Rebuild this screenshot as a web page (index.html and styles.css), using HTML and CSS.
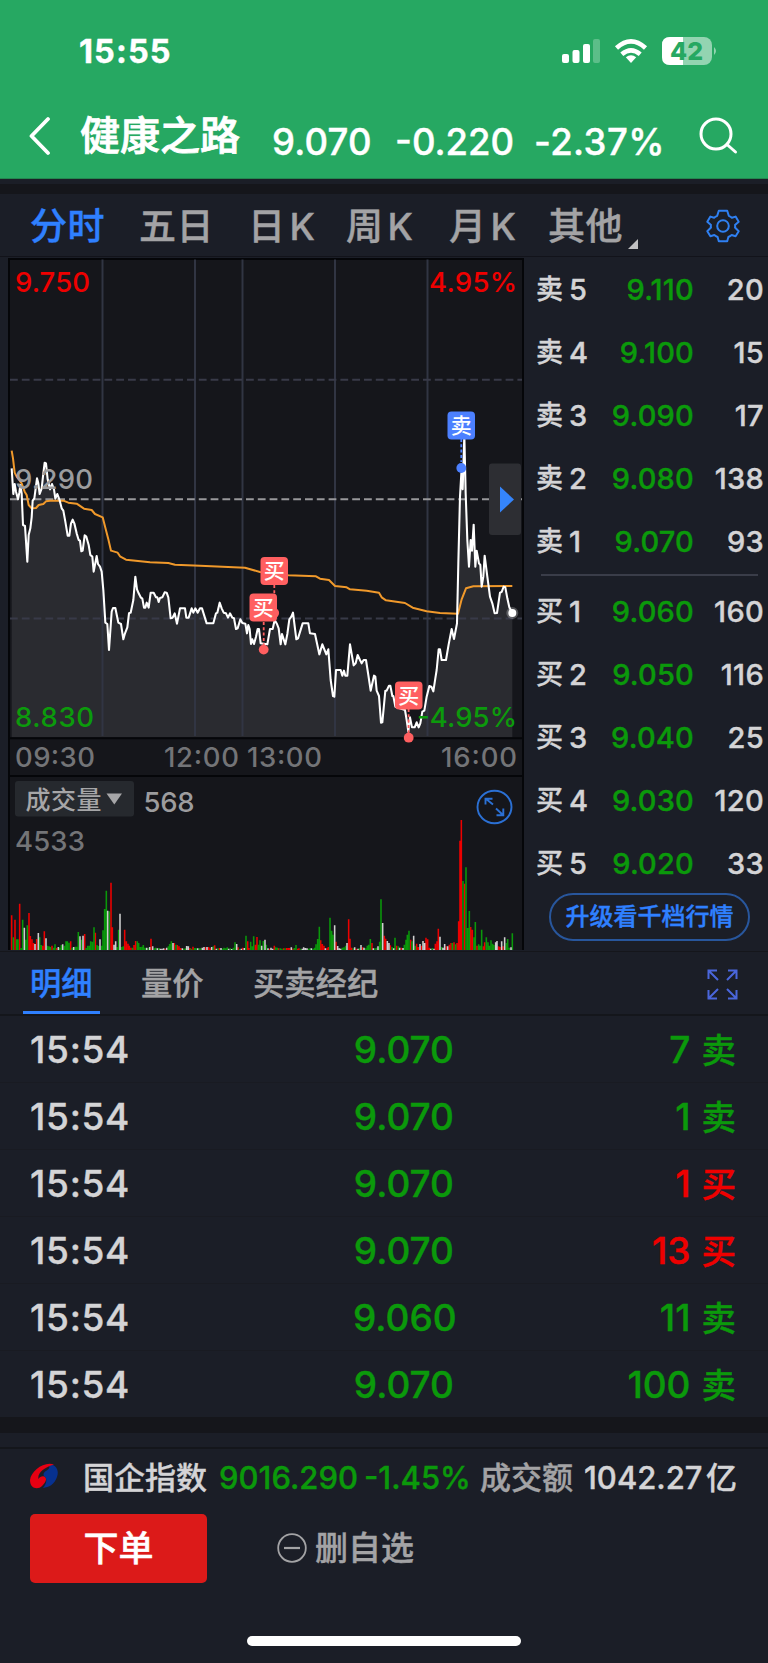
FILE: index.html
```html
<!DOCTYPE html>
<html lang="zh-CN">
<head>
<meta charset="utf-8">
<title>健康之路</title>
<link rel="stylesheet" href="styles.css">
</head>
<body>
<div class="screen">
  <header class="top">
    <div class="status">
      <span class="clock">15:55</span>
      <svg class="status-icons" width="156" height="32" viewBox="560 35 156 32">
        <g fill="#fff">
          <rect x="562" y="54" width="7" height="9" rx="2"/>
          <rect x="572.5" y="50" width="7" height="13" rx="2"/>
          <rect x="583" y="44" width="7" height="19" rx="2"/>
          <rect x="593" y="39" width="7" height="24" rx="2" opacity=".25"/>
          <path d="M631 63l-5.200-5.800q5.200-4 10.400 0z"/>
        </g>
        <g fill="none" stroke="#fff" stroke-width="4.600">
          <path d="M616.500 48Q631 34.700 645.500 48"/>
          <path d="M621.800 54.200Q631 46.400 640.200 54.200"/>
        </g>
        <rect x="662" y="37" width="50" height="28" rx="8" fill="#fff" opacity=".5"/>
        <path d="M683 37h-13q-8 0-8 8v12q0 8 8 8h13z" fill="#fff"/>
        <path d="M714 47q4 4 0 8z" fill="#fff" opacity=".5"/>
        <text class="battery" x="670" y="60" textLength="33" lengthAdjust="spacingAndGlyphs">42</text>
      </svg>
    </div>
    <div class="nav">
      <svg class="back" width="22" height="40" viewBox="0 0 22 40" fill="none" stroke="#fff" stroke-width="3.800" stroke-linecap="round" stroke-linejoin="round"><path d="M19 3L2.500 20 19 37"/></svg>
      <h1 class="title">健康之路</h1>
      <span class="quote q1">9.070</span><span class="quote q2">-0.220</span><span class="quote q3">-2.37%</span>
      <svg class="search" width="40" height="40" viewBox="0 0 40 40" fill="none" stroke="#fff" stroke-width="3" stroke-linecap="round"><circle cx="17" cy="18" r="15"/><path d="M28 28.500L36.500 36"/></svg>
    </div>
  </header>
  <div class="band"></div>
  <nav class="periods">
    <span class="on">分时</span><span>五日</span><span>日<i>K</i></span><span>周<i>K</i></span><span>月<i>K</i></span><span class="more">其他</span>
    <svg class="gear" width="34" height="34" viewBox="-17 -17 34 34" fill="none" stroke="#2f80f2" stroke-width="2" stroke-linejoin="round"><circle r="5.800"/><path d="M-4.200-15.200H4.200L5.800-10.200Q7.600-9.400 8.900-8.200L12.600-9.400 15.700-4.300 12-1Q12.400 0 12 1.500L15.700 5.200 12.600 10.200 8.700 9Q7.200 10.200 5.400 11L4.200 15.200H-4.200L-5.400 11Q-7.200 10.200-8.700 9L-12.600 10.200-15.700 5.200-12 1.500Q-12.400 0-12-1L-15.700-4.300-12.600-9.400-8.900-8.200Q-7.600-9.400-5.800-10.200Z"/></svg>
  </nav>
  <main class="market">
    <svg class="chart" width="516" height="692" viewBox="8 258 516 692">
      <rect x="8" y="258" width="516" height="692" fill="#050609"/>
      <rect x="10" y="260" width="512" height="690" fill="#15161b"/>
      <g transform="translate(0 430) scale(.33333)">
        <path id="area" fill="#2a2b30"/>
      </g>
      <path d="M102.500 259.500V736M195 259.500V736M242.500 259.500V736M335 259.500V736M427.500 259.500V736" stroke="#313543" stroke-width="2"/>
      <path d="M10 379.700H522M10 618.500H522" stroke="#383a48" stroke-width="2" stroke-dasharray="7.800 4"/>
      <path d="M10 499.200H522" stroke="#98989b" stroke-width="2" stroke-dasharray="7.800 4"/>
      <path d="M10 738.300H522M10 776H522" stroke="#050609" stroke-width="2"/>
      <g transform="translate(0 430) scale(.33333)" fill="none" stroke-linejoin="round">
        <path stroke="#f0992b" stroke-width="6" d="M35 62L39 85 44 128 50 140 58 150 65 160 74 185 80 195 86 225 95 235 108 234 116 225 130 222 138 214 150 212 190 212 205 218 230 221 252 236 275 240 285 252 308 262 317 297 325 328 333 362 353 368 360 379 378 389 450 397 505 399 525 404 600 407 735 413 780 426 865 436 948 439 960 446 987 450 1005 468 1040 472 1050 478 1100 482 1137 488 1145 502 1158 511 1215 519 1238 533 1280 544 1320 549 1374 551 1385 508 1398 475 1420 469 1537 468"/>
        <path id="price" stroke="#fff" stroke-width="6.200"/>
      </g>
      <circle cx="512.300" cy="613" r="6" fill="#fff" opacity=".25"/><circle cx="512.300" cy="613" r="4" fill="#fff"/>
      <g class="axis">
        <text x="15" y="292" textLength="75" fill="#ee0000">9.750</text>
        <text x="429" y="292" textLength="88" fill="#ee0000">4.95%</text>
        <text x="15" y="488.500" textLength="78" fill="#9c9c9e">9.290</text>
        <text x="15" y="727" textLength="79" fill="#0c9a0c">8.830</text>
        <text x="417" y="727" textLength="100" fill="#0c9a0c">-4.95%</text>
        <g fill="#737477">
          <text x="15" y="766.700" textLength="80">09:30</text>
          <text x="164" y="766.700" textLength="75">12:00</text>
          <text x="247" y="766.700" textLength="75">13:00</text>
          <text x="441" y="766.700" textLength="76">16:00</text>
          <text x="15" y="850.700" textLength="70">4533</text>
        </g>
        <text x="143.500" y="811.700" textLength="51" fill="#9c9c9e">568</text>
      </g>
      <g stroke="#ff5f60" stroke-width="1.800" stroke-dasharray="3 2.300"><path d="M274.300 585V612M263.700 622V645M408.600 709V735"/></g>
      <circle cx="274.300" cy="613" r="4.800" fill="#ff5f60"/>
      <circle cx="263.700" cy="649.600" r="4.900" fill="#ff5f60"/>
      <circle cx="408.700" cy="737.700" r="4.900" fill="#ff5f60"/>
      <path d="M461.300 439V462" stroke="#4c80ff" stroke-width="1.800" stroke-dasharray="3 2.300"/>
      <circle cx="461.300" cy="468" r="4.900" fill="#4c80ff"/>
      <g class="pin">
        <rect x="260.500" y="557" width="27.500" height="28" rx="4" fill="#ff5f60"/><text x="274.300" y="578">买</text>
        <rect x="249.500" y="593.500" width="27.500" height="28" rx="4" fill="#ff5f60"/><text x="263.300" y="614.500">买</text>
        <rect x="395" y="681.500" width="27.500" height="28" rx="4" fill="#ff5f60"/><text x="408.700" y="702.500">买</text>
        <rect x="447.500" y="411.500" width="27.500" height="28" rx="4" fill="#4c80ff"/><text x="461.300" y="432.500">卖</text>
      </g>
      <rect x="489" y="463.500" width="32" height="71.500" rx="3" fill="#2d2e33"/>
      <path d="M500 486.500L514 499.500 500 512.500Z" fill="#3585fb"/>
      <rect x="15" y="781" width="119" height="35.500" rx="3" fill="#26292e"/>
      <text class="kind" x="25.500" y="808.500" textLength="76">成交量</text>
      <path d="M106.500 793.500H122L114.300 804.500Z" fill="#a6a6a8"/>
      <g fill="none" stroke="#2b70d4" stroke-width="1.900"><ellipse cx="494.500" cy="807" rx="17" ry="16.200"/><path d="M493 804.500L485.500 798.500M485.500 804.500V798.800H492.500M496 808.500L503 815M503.300 808.500V815.200H496.500"/></g>
      <g transform="translate(0 740) scale(.33333)" fill="none" stroke-width="4.700">
        <path id="vol-r" stroke="#ec0000"/><path id="vol-g" stroke="#0a980a"/><path id="vol-w" stroke="#cfcfcf"/>
      </g>
    </svg>
    <section class="book">
      <div class="side">
        <div class="lv"><b>卖</b><b>5</b><em>9.110</em><u>20</u></div>
        <div class="lv"><b>卖</b><b>4</b><em>9.100</em><u>15</u></div>
        <div class="lv"><b>卖</b><b>3</b><em>9.090</em><u>17</u></div>
        <div class="lv"><b>卖</b><b>2</b><em>9.080</em><u>138</u></div>
        <div class="lv"><b>卖</b><b>1</b><em>9.070</em><u>93</u></div>
      </div>
      <div class="side buy">
        <div class="lv"><b>买</b><b>1</b><em>9.060</em><u>160</u></div>
        <div class="lv"><b>买</b><b>2</b><em>9.050</em><u>116</u></div>
        <div class="lv"><b>买</b><b>3</b><em>9.040</em><u>25</u></div>
        <div class="lv"><b>买</b><b>4</b><em>9.030</em><u>120</u></div>
        <div class="lv"><b>买</b><b>5</b><em>9.020</em><u>33</u></div>
      </div>
      <div class="upgrade">升级看千档行情</div>
    </section>
  </main>
  <nav class="tabs">
    <span class="on">明细</span><span>量价</span><span>买卖经纪</span>
    <svg class="expand" width="31" height="31" viewBox="0 0 31 31" fill="none" stroke="#4a66dc" stroke-width="2"><path d="M11 11L2 2M1.500 10V1.500H10M20 11L29 2M21 1.500H29.500V10M11 20L2 29M1.500 21V29.500H10M20 20L29 29M29.500 21V29.500H21"/></svg>
  </nav>
  <section class="trades">
    <div class="tr"><span>15:54</span><em>9.070</em><strong><i>7</i>卖</strong></div>
    <div class="tr"><span>15:54</span><em>9.070</em><strong><i>1</i>卖</strong></div>
    <div class="tr"><span>15:54</span><em>9.070</em><strong class="up"><i>1</i>买</strong></div>
    <div class="tr"><span>15:54</span><em>9.070</em><strong class="up"><i>13</i>买</strong></div>
    <div class="tr"><span>15:54</span><em>9.060</em><strong><i>11</i>卖</strong></div>
    <div class="tr"><span>15:54</span><em>9.070</em><strong><i>100</i>卖</strong></div>
  </section>
  <div class="band low"></div>
  <footer class="foot">
    <div class="index">
      <svg class="flag" width="28" height="26" viewBox="0 0 28 26"><path d="M16 2C24-1 30 6 27 14 24 22 19 24 13 25 17 20 17 16 15 14 12 12 14 9 16 8 20 6 21 2 16 2Z" fill="#073190"/><path d="M24 1.500C14-2 1 8 0 17 0 26 8 27 12 23 17 18 17 15 14 13.500 12 13 9.500 14 8.500 16 7 10 15 4 24 1.500Z" fill="#e60012"/></svg>
      <span class="name">国企指数</span><em class="v1">9016.290</em><em class="v2">-1.45%</em><span class="lab">成交额</span><span class="v3">1042.27</span><span class="unit">亿</span>
    </div>
    <div class="actions">
      <button class="order">下单</button>
      <span class="remove"><svg width="30" height="30" viewBox="0 0 30 30" fill="none" stroke="#a3a3a5" stroke-width="1.800"><circle cx="15" cy="15" r="13.800"/><path d="M7 15H23" stroke-width="2.200"/></svg>删自选</span>
    </div>
    <div class="home"></div>
  </footer>
</div>
<script src="chart.js"></script>
</body>
</html>
```
FILE: styles.css
```css
* { box-sizing: border-box; }
body { margin: 0; background: #1b1e27; font-family: Inter, "Noto Sans CJK SC", sans-serif; font-weight: 500; color: #d4d4d6; -webkit-text-stroke: .4px currentColor; }
svg text { -webkit-text-stroke: 0; }
i, em, u { font-style: normal; text-decoration: none; }
.screen { width: 768px; height: 1663px; overflow: hidden; white-space: nowrap; background: #1b1e27; }
svg { display: block; flex: none; }

.top { height: 179px; background: #26a862; color: #fff; border-bottom: 1px solid #23874f; }
.status { height: 102px; padding: 0 52px 0 79px; display: flex; justify-content: space-between; align-items: center; }
.clock { font-size: 32.500px; font-weight: 700; letter-spacing: 1.100px; }
.battery { font-size: 25px; font-weight: 800; fill: #26a862; }
.nav { height: 68px; padding-left: 29px; display: flex; align-items: center; }
.title { margin: 0 0 0 29px; width: 192px; font-size: 40px; line-height: 60px; font-weight: 500; -webkit-text-stroke: .8px currentColor; }
.quote { font-size: 36.500px; line-height: 40px; padding-top: 11px; }
.q1 { width: 123px; letter-spacing: .2px; }
.q2 { width: 139px; }
.q3 { width: 165px; letter-spacing: .4px; }

.band { margin-top: 5px; height: 10px; background: #15161b; }
.periods { height: 63px; padding: 4px 28px 0 30px; display: grid; grid-template-columns: 109px 109px 98px 103px 99px 158px auto; align-items: center; font-size: 37px; line-height: 56px; letter-spacing: .4px; color: #a3a3a5; border-bottom: 1px solid #12131a; }
.periods .on, .tabs .on { color: #2f80ff; }
.periods i { font-size: 37px; margin-left: 4px; }
.periods .gear { margin-top: -2px; }
.more::after { content: ""; display: inline-block; margin-left: 5px; border-left: 10px solid transparent; border-bottom: 10px solid #c0c0c2; transform: translateY(9px); }

.market { display: flex; height: 695px; padding: 1px 0 0 8px; border-bottom: 1px solid #15161b; }
.axis { font-size: 27.500px; font-weight: 500; }
.pin { font-size: 21px; font-weight: 500; fill: #fff; text-anchor: middle; }
.chart .pin text { -webkit-text-stroke: .5px #fff; }
.kind { font-size: 25px; fill: #a6a6a8; }
.chart .kind { -webkit-text-stroke: .4px #a6a6a8; }
.book { width: 244px; padding: 0 4px 0 12px; font-size: 29px; }
.side { border-bottom: 2px solid #3a3d49; margin: 0 6px 0 5px; height: 318px; padding-top: 1px; }
.side.buy { border: 0; height: 316px; padding-top: 5px; }
.lv { height: 62.800px; margin: 0 -6px 0 -5px; display: grid; grid-template-columns: 33px 22px 103px 70px; align-items: center; line-height: 40px; }
.lv b { font-weight: 500; }
.lv b:first-child { font-size: 27px; }
.lv em { color: #0b990b; text-align: right; letter-spacing: .2px; }
.lv u { text-align: right; letter-spacing: .3px; }
.upgrade { margin: 1px 0 0 13px; width: 201px; height: 48px; border: 2px solid #28569c; border-radius: 24px; text-align: center; font-size: 24px; line-height: 44px; color: #2f80ff; }

.tabs { height: 64px; padding: 0 30px 0 23px; display: flex; font-size: 31.300px; line-height: 64px; color: #a3a3a5; border-bottom: 2px solid #14161b; align-items: center; }
.tabs span { width: 112px; padding-left: 7px; height: 62px; }
.tabs .on { width: 77px; border-bottom: 3px solid #2f80ff; margin-right: 34px; }
.tabs .expand { margin: 2px 0 0 auto; }

.trades { height: 401px; }
.tr { height: 67px; padding: 2px 32px 0 30px; border-bottom: 1px solid #191b22; display: grid; grid-template-columns: 323px 101px 1fr; align-items: center; font-size: 37px; line-height: 60px; }
.tr span { letter-spacing: .7px; }
.tr em { color: #0b990b; text-align: right; }
.tr strong { font-weight: 500; font-size: 34.500px; color: #0b990b; text-align: right; }
.tr strong i { font-size: 37px; margin-right: 11px; }
.tr .up { color: #ee0000; }

.low { margin: 0; height: 16px; }
.foot { height: 230px; padding-top: 14px; }
.index { height: 60px; border-top: 2px solid #14161b; padding-left: 30px; display: flex; align-items: center; font-size: 31px; line-height: 46px; }
.flag { margin-top: -4px; }
.name { margin-left: 25px; width: 136px; }
.index em { color: #0b990b; }
.v1 { width: 145px; }
.v2 { width: 116px; }
.lab { color: #a3a3a5; width: 104px; }
.v3 { width: 122px; }
.actions { display: flex; align-items: center; padding: 6px 0 0 30px; height: 76px; }
.order { width: 177px; height: 69px; border: 0; border-radius: 5px; background: #dc1a19; color: #fff; font: 500 35px/69px Inter, "Noto Sans CJK SC", sans-serif; padding: 0; -webkit-text-stroke: .5px currentColor; }
.remove { margin-left: 70px; display: flex; align-items: center; gap: 8px; font-size: 33px; line-height: 50px; color: #a3a3a5; }
.home { width: 274px; height: 10px; border-radius: 5px; background: #fff; margin: 53px 0 0 247px; }
```
FILE: chart.js
```js
// Price series, in thirds of a pixel.
const price = `35,115 40,192 44,162 48,185 54,208 58,188 61,165 65,190 69,285 75,288 82,395 86,315 91,295 95,262 98,212 103,205 111,145 115,160 119,192 125,175 130,130 134,98 138,100 143,148 150,178 156,162 162,178 166,206 172,192 178,208 185,235 190,242 196,275 203,317 208,317 213,280 218,269 223,280 230,310 236,330 240,332 244,364 248,362 254,316 259,320 266,345 271,375 277,380 281,425 290,378 294,402 300,410 305,425 310,480 316,578 322,582 327,660 335,545 339,534 346,534 355,578 363,582 370,628 375,610 382,592 387,550 392,548 400,510 406,440 411,478 416,490 422,502 427,506 432,533 436,533 440,518 446,533 452,488 461,488 468,502 472,502 476,516 480,504 487,502 494,487 500,488 505,502 512,565 518,563 524,550 531,581 540,535 555,535 559,563 566,563 575,535 580,548 586,535 593,548 600,535 606,535 620,580 640,580 648,550 652,548 659,518 665,535 671,548 678,550 684,563 690,550 697,563 702,565 708,597 713,595 721,568 727,579 736,581 741,610 745,585 749,597 753,642 757,628 762,642 768,620 773,597 777,597 782,640 802,643 810,597 818,597 824,570 831,582 836,595 842,643 846,612 856,643 862,612 868,568 874,560 879,548 889,628 894,625 908,580 925,580 930,610 945,612 958,673 967,643 973,658 979,673 985,658 992,750 999,798 1003,800 1008,720 1022,720 1027,737 1032,722 1036,737 1042,737 1050,643 1061,706 1067,700 1073,675 1080,690 1085,700 1091,690 1098,690 1105,735 1112,782 1122,737 1126,740 1130,782 1137,798 1143,878 1147,877 1156,782 1160,782 1167,767 1171,767 1177,798 1180,798 1186,830 1215,840 1220,870 1225,905 1230,862 1236,892 1244,892 1250,877 1256,892 1261,880 1267,845 1273,842 1280,800 1288,768 1294,770 1300,784 1306,745 1310,720 1316,658 1320,658 1325,690 1338,690 1346,643 1355,597 1362,627 1371,580 1375,400 1380,200 1384,130 1388,178 1393,15 1397,190 1402,330 1407,410 1412,330 1416,362 1421,284 1426,410 1430,362 1437,400 1441,405 1445,470 1450,440 1454,377 1462,440 1470,500 1477,520 1484,550 1491,549 1500,488 1505,486 1511,470 1516,472 1522,505 1528,532 1537,549`;
document.getElementById('price').setAttribute('d', 'M' + price);
document.getElementById('area').setAttribute('d', 'M35,922 ' + price + ' 1537,922Z');

// Volume bars: x, colour (r/g/w), height.
const first = `35r103 40g37 45r90 50g31 54g31 59r138 63g5 68g90 73w66 77g30 82g73 87r110 91r41 96r31 101r20 105w17 110r32 115w50 119g37 124g14 128r12 133r55 138w34 142g12 147g10 151g8 156r12 161g6 165g16 170r5 175w8 179g6 184g14 188w16 193g12 198g25 202g25 207g21 212r25 216g6 221w8 226g9 230g9 235g53 240w40 244g30 249w42 254r47 258g5 263g12 268g12 272g25 277g24 282g67 286r51 291g14 295g11 300w31 305g12 309g58 314g122 319g177 323w117 328g115 333r201 337r67 342w15 347w25 351g8 356g60 360w108 365g8 370g10 374r60 379r25 384r18 388r12 393r6 398g6 402r14 407r26 412g25 416g20 421g8 426g9 430g14 435g6 440w6 444g5 449w8 453r33 458w10 463g4 467g6 472w4 477g5 481w3 486w3 491w4 495r3 500w6 505g10 509g17 514g25 519w20 523r20 528g15 532r14 537r10 542r5 547w4 551g3 556g4 560w11 565w10 570r5 574g3 579r9 584g5 588g4 593w4 598g4 602g4 607w6 612w8 617r7 621w8 626r8 631r4 635w8 640g10 644r13 649w3 654g4 658r5 663w5 668g3 672g6 677g4 682g7 686w3 691g4 695w2 700g6 705g22 710w17 714r7 719g2 724w3 728r6 733w5 738g42 743r25 747r5 752g24 757g10 761g40 766r15 771r38 775g15 780g28`;
const second = `5w12 10g26 15w30 19g15 24w4 29r3 33w6 38w3 43r12 47g7 52g6 56r4 61g4 66g3 71r4 75g4 80r5 85r5 89r5 94w7 99r3 103g5 108g14 113r3 117r4 122g3 127w3 131w7 136w5 141w4 145g3 150g4 154w4 159g3 164g6 168g16 173g32 178g69 182r28 187r17 192r12 196w4 201r4 205r8 210g96 215g57 219g45 224w73 228r24 233w11 238w4 242w3 247g6 252g7 257g12 261w20 266r91 270r33 275r6 280g4 284w7 289r3 294w3 298g4 303w14 308r7 312w6 317g4 322g12 326g15 331g32 336r20 340w4 345g4 350g6 354w10 359g24 363g151 368w80 373r42 377r33 382w26 387w20 391r13 396g8 401w4 405g36 410r12 415g10 419w6 424r6 429w5 433g15 438g30 442g45 447g57 452r30 456g25 461w42 466g12 470r18 475r8 480w17 484r12 489w26 494w20 498r36 503r31 508r6 512w3 517g5 522w3 526r18 531r25 535r63 540w39 545g8 549w6 554w17 559r10 563w10 568r15 573r20 577g20 582r22 587g16 591r20 596r85 600r327 604r389 609g206 614r198 618g247 623g65 628g116 632r68 637r60 642g37 646g83 651r12 656g16 660g12 665g60 670r10 674r22 679g37 684g22 688g12 693g28 698g18 702g14 707w22 711w26 716r10 720r8 725w25 729r10 734w37 739g20 743g32 748g6 753w7 757g49`;
const paths = { r: '', g: '', w: '' };
const add = (text, offset) => {
  for (const [, x, c, h] of text.matchAll(/(\d+)([rgw])(\d+)/g)) {
    paths[c] += `M${+x + offset} 630V${629 - h}`;
  }
};
add(first, 0);
add(second, 780);
for (const c of 'rgw') document.getElementById('vol-' + c).setAttribute('d', paths[c]);
```
